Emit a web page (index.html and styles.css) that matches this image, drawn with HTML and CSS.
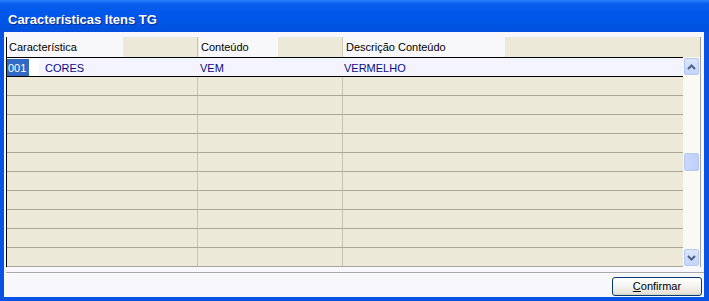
FILE: index.html
```html
<!DOCTYPE html>
<html lang="pt">
<head>
<meta charset="utf-8">
<title>Características Itens TG</title>
<link rel="stylesheet" href="styles.css">
</head>
<body>
<div class="window">
  <div class="titlebar">Características Itens TG</div>
  <div class="client">
    <div class="grid">
      <div class="header">
        <div class="hcell hc1"><span class="hlabel hl1">Característica</span></div>
        <div class="hcell hc2"><span class="hlabel hl2">Conteúdo</span></div>
        <div class="hcell hc3"><span class="hlabel hl3">Descrição Conteúdo</span></div>
      </div>
      <div class="content">
        <div class="rows">
          <div class="row sel">
            <div class="cell c1"><span class="edit"><span class="selected">001</span></span><span class="desc">CORES</span></div>
            <div class="cell c2">VEM</div>
            <div class="cell c3">VERMELHO</div>
          </div>
          <div class="row"><div class="cell c1"></div><div class="cell c2"></div><div class="cell c3"></div></div>
          <div class="row"><div class="cell c1"></div><div class="cell c2"></div><div class="cell c3"></div></div>
          <div class="row"><div class="cell c1"></div><div class="cell c2"></div><div class="cell c3"></div></div>
          <div class="row"><div class="cell c1"></div><div class="cell c2"></div><div class="cell c3"></div></div>
          <div class="row"><div class="cell c1"></div><div class="cell c2"></div><div class="cell c3"></div></div>
          <div class="row"><div class="cell c1"></div><div class="cell c2"></div><div class="cell c3"></div></div>
          <div class="row"><div class="cell c1"></div><div class="cell c2"></div><div class="cell c3"></div></div>
          <div class="row"><div class="cell c1"></div><div class="cell c2"></div><div class="cell c3"></div></div>
          <div class="row"><div class="cell c1"></div><div class="cell c2"></div><div class="cell c3"></div></div>
          <div class="row"><div class="cell c1"></div><div class="cell c2"></div><div class="cell c3"></div></div>
        </div>
        <div class="scroll">
          <div class="sbtn">
            <svg width="9" height="6" viewBox="0 0 9 6"><polyline points="1,5 4.5,1.5 8,5" fill="none" stroke="#4D6185" stroke-width="2"/></svg>
          </div>
          <div class="thumb"></div>
          <div class="sbtn down">
            <svg width="9" height="6" viewBox="0 0 9 6"><polyline points="1,1 4.5,4.5 8,1" fill="none" stroke="#4D6185" stroke-width="2"/></svg>
          </div>
        </div>
      </div>
    </div>
    <div class="sep"></div>
    <div class="footer">
      <button class="btn" type="button"><span class="ul">C</span>onfirmar</button>
    </div>
  </div>
</div>
</body>
</html>
```
FILE: styles.css
```css
html, body {
  margin: 0;
  padding: 0;
  background: #0A55E6;
}
body {
  font-family: "Liberation Sans", Arial, sans-serif;
  font-size: 11px;
  color: #000;
}
.window {
  width: 709px;
  height: 301px;
  background: #0754E4;
  display: flex;
  flex-direction: column;
}
.titlebar {
  flex: none;
  height: 32px;
  box-sizing: border-box;
  padding: 12px 0 0 8px;
  font-size: 13px;
  line-height: 15px;
  font-weight: bold;
  color: #fff;
  text-shadow: 1px 1px 0 #0A2A8C;
  background: linear-gradient(#2B80F8 0%, #0A5EEE 12%, #0058EA 40%, #0055E5 70%, #0350DD 100%);
}
.client {
  flex: 1;
  margin: 0 5px 4px 4px;
  background: #F8F7FC;
  padding-top: 5px;
  display: flex;
  flex-direction: column;
}
.grid {
  height: 230px;
  margin: 0 3px 0 2px;
  border-left: 1px solid #000;
  border-right: 1px solid #9D9D9D;
  background: #ECE9D8;
  display: flex;
  flex-direction: column;
}
.header {
  height: 20px;
  display: flex;
  background: #ECE9D8;
}
.hcell {
  display: flex;
  height: 20px;
}
.hc1 { width: 190px; border-right: 1px solid #CAC7B8; }
.hc2 { width: 144px; border-right: 1px solid #CAC7B8; }
.hc3 { flex: 1; }
.hlabel {
  display: block;
  height: 20px;
  line-height: 20px;
  background: #F8F8FB;
  box-sizing: border-box;
  white-space: nowrap;
}
.hl1 { width: 116px; padding-left: 2px; }
.hl2 { width: 79px; margin-left: 1px; padding-left: 2px; }
.hl3 { width: 162px; padding-left: 3px; }
.content {
  flex: 1;
  display: flex;
}
.rows {
  width: 676px;
  display: flex;
  flex-direction: column;
}
.row {
  height: 18px;
  display: flex;
  border-bottom: 1px solid #A9A696;
}
.cell {
  height: 18px;
  line-height: 18px;
  white-space: nowrap;
}
.c1 { width: 190px; border-right: 1px solid #C8C4B4; }
.c2 { width: 145px; border-right: 1px solid #C8C4B4; padding-left: 2px; box-sizing: border-box; }
.c3 { flex: 1; padding-left: 1px; }
.row.sel {
  border-top: 1px solid #000;
  border-bottom: 1px solid #000;
  background: #F4F4FE;
  color: #0A0A84;
}
.row.sel .cell {
  border-right: none;
  line-height: 20px;
}
.row.sel .c1 { width: 191px; display: flex; align-items: center; }
.row.sel .c2 { width: 145px; }
.edit {
  display: flex;
  width: 32px;
  height: 17px;
  margin-top: 1px;
  background: #fff;
}
.selected {
  background: #316AC5;
  color: #fff;
  line-height: 18px;
  padding: 0 3px 0 1px;
}
.desc { margin-left: 6px; padding-top: 1px; }
.scroll {
  width: 17px;
  background: #FAF9F4;
  display: flex;
  flex-direction: column;
}
.sbtn {
  box-sizing: border-box;
  height: 17px;
  margin: 1px 1px 0 1px;
  border: 1px solid #B4C8F6;
  border-radius: 2px;
  background: linear-gradient(#DCE6FD, #C3D4FB);
  display: flex;
  align-items: center;
  justify-content: center;
}
.sbtn.down {
  margin-top: auto;
  margin-bottom: 1px;
}
.thumb {
  box-sizing: border-box;
  height: 18px;
  margin: 78px 1px 0 1px;
  border: 1px solid #B4C8F6;
  border-radius: 2px;
  background: linear-gradient(90deg, #C9D8FC, #BDCFFA);
}
.sep {
  margin: 5px 0 0 2px;
  border-top: 1px solid #A7A6AA;
  border-bottom: 1px solid #FFFFFF;
}
.footer {
  display: flex;
  justify-content: flex-end;
  padding: 3px 2px 0 0;
}
.btn {
  width: 90px;
  height: 19px;
  padding: 0;
  border: 1px solid #003C74;
  border-radius: 3px;
  background: linear-gradient(#FFFFFF 0%, #F3F2EE 50%, #E6E3D8 90%, #D6D0C5 100%);
  font-family: "Liberation Sans", Arial, sans-serif;
  font-size: 11px;
  color: #000;
  line-height: 17px;
}
.ul { text-decoration: underline; }
```
